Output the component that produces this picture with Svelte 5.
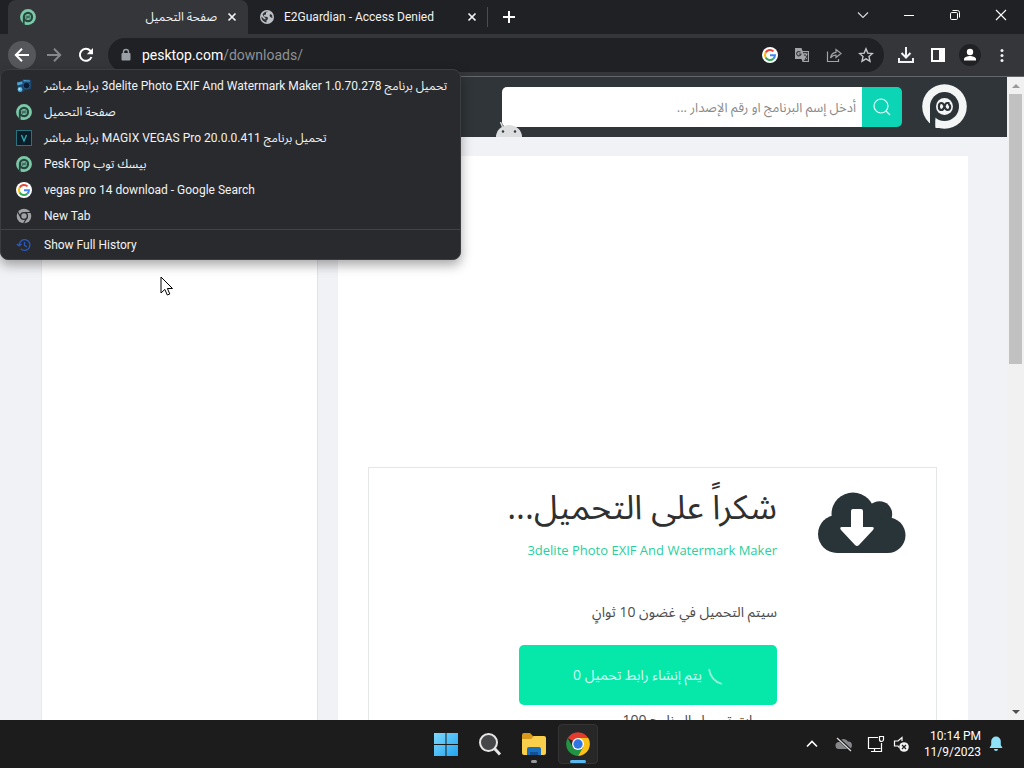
<script>
  const history = [
    { icon: 'camera', text: 'تحميل برنامج 3delite Photo EXIF And Watermark Maker 1.0.70.278 برابط مباشر', dir: 'rtl' },
    { icon: 'pesk', text: 'صفحة التحميل', dir: 'rtl' },
    { icon: 'vegas', text: 'تحميل برنامج MAGIX VEGAS Pro 20.0.0.411 برابط مباشر', dir: 'rtl' },
    { icon: 'pesk', text: 'PeskTop بيسك توب', dir: 'ltr' },
    { icon: 'google', text: 'vegas pro 14 download - Google Search', dir: 'ltr' },
    { icon: 'chrome', text: 'New Tab', dir: 'ltr' }
  ];
</script>

{#snippet pesk(size, color, inner)}
  <svg width={size} height={size} viewBox="0 0 45 45" aria-hidden="true">
    <circle cx="22.500" cy="22.500" r="22.300" fill={color} />
    <circle cx="22.500" cy="22.500" r="14.500" fill={inner} />
    <path fill={inner} d="M8 22H13.500V45H8Z" />
    <path fill={color} d="M13.500 35.500Q17 39 22 38.500V44H13.500Z" />
    <circle cx="22.500" cy="22.500" r="8.500" fill={color} />
    <path fill="none" stroke={inner} stroke-width="2.200" d="M27.500 19H25C22 19 23 26 19.500 26C16 26 16 19 19.500 19C23 19 22 26 25.500 26C29 26 29 20 26 20.500M17.500 26H20" />
  </svg>
{/snippet}

{#snippet google()}
  <svg width="16" height="16" viewBox="0 0 16 16" aria-hidden="true">
    <circle cx="8" cy="8" r="8" fill="#fff" />
    <g fill="none" stroke-width="2">
      <path stroke="#ea4335" d="M3.600 5.600A5 5 0 0 1 11.500 4.400" />
      <path stroke="#fbbc05" d="M3.600 10.400A5 5 0 0 1 3.600 5.600" />
      <path stroke="#34a853" d="M11.300 11.700A5 5 0 0 1 3.600 10.400" />
      <path stroke="#4285f4" d="M8 8.200H13A5 5 0 0 1 11.300 11.700" />
    </g>
  </svg>
{/snippet}

{#snippet close()}
  <svg width="10" height="10" viewBox="0 0 10 10" aria-hidden="true"><path d="M1.500 1.500l7 7M8.500 1.500l-7 7" stroke="#f1f3f4" stroke-width="1.700" /></svg>
{/snippet}

<div class="screen">
  <div class="tabstrip">
    <div class="tab active">
      {@render pesk(16, '#7bc9a8', '#28463f')}
      <span class="title" dir="rtl">صفحة التحميل</span>
      <button class="bare" aria-label="Close tab">{@render close()}</button>
    </div>
    <div class="tab">
      <svg width="14" height="14" viewBox="0 0 14 14" aria-hidden="true">
        <circle cx="7" cy="7" r="7" fill="#bdc1c6" />
        <path fill="#303236" d="M8 1.500L6 2.500V4.500L4 5V6.500L7.500 7L8 9L6.500 10.500V12.500A5.600 5.600 0 0 1 1.400 6.500L4 9L5.500 9.500V8L4 7L2.500 4.500A5.600 5.600 0 0 1 8 1.500ZM10 4l2 1 .5 3L11 7.500 9.500 6z" />
      </svg>
      <span class="title">E2Guardian - Access Denied</span>
      <button class="bare" aria-label="Close tab">{@render close()}</button>
    </div>
    <button class="bare new" aria-label="New tab"><svg width="14" height="14" viewBox="0 0 14 14"><path d="M7 1v12M1 7h12" stroke="#fff" stroke-width="2" /></svg></button>
    <div class="windowctl">
      <button class="bare" aria-label="Search tabs"><svg width="12" height="12" viewBox="0 0 12 12"><path d="M1 3.500l5 5 5-5" fill="none" stroke="#dadce0" stroke-width="1.100" /></svg></button>
      <button class="bare" aria-label="Minimize"><svg width="12" height="12" viewBox="0 0 12 12"><path d="M1 6.500h10" stroke="#fff" /></svg></button>
      <button class="bare" aria-label="Restore"><svg width="12" height="12" viewBox="0 0 12 12"><rect x="1.500" y="3.500" width="7" height="7" rx="1.200" fill="none" stroke="#fff" /><path d="M3.500 1.500H8.500a2 2 0 0 1 2 2V8.500" fill="none" stroke="#fff" /></svg></button>
      <button class="bare" aria-label="Close"><svg width="12" height="12" viewBox="0 0 12 12"><path d="M1 1l10 10M11 1L1 11" stroke="#fff" stroke-width="1.100" /></svg></button>
    </div>
  </div>

  <div class="toolbar">
    <button class="bare round lit" aria-label="Back"><svg width="16" height="16" viewBox="0 0 16 16"><path d="M15 8H2.500M8 1.800L1.800 8L8 14.200" fill="none" stroke="#fff" stroke-width="2" /></svg></button>
    <button class="bare round" aria-label="Forward"><svg width="16" height="16" viewBox="0 0 16 16"><path d="M1 8h12.500M8 1.800L14.200 8L8 14.200" fill="none" stroke="#85878a" stroke-width="2" /></svg></button>
    <button class="bare round" aria-label="Reload"><svg width="16" height="16" viewBox="0 0 16 16"><path d="M13.500 10A6 6 0 1 1 12.300 3.700L13 4.500" fill="none" stroke="#fff" stroke-width="2" /><path d="M15 1v6.200H8.800z" fill="#fff" /></svg></button>
    <div class="omnibox">
      <svg width="12" height="14" viewBox="0 0 12 14" aria-hidden="true"><rect x="1.500" y="5" width="9" height="7.500" rx="1" fill="#9aa0a6" /><path d="M3.500 5.500V4a2.500 2.500 0 0 1 5 0v1.500" fill="none" stroke="#9aa0a6" stroke-width="1.400" /></svg>
      <span class="url">pesktop.com<i>/downloads/</i></span>
      <div class="omniicons">
        <button class="bare" aria-label="Google">{@render google()}</button>
        <button class="bare" aria-label="Translate"><svg width="16" height="16" viewBox="0 0 16 16"><path fill="#a2a4a8" d="M1 1h6.500l1 3H15v11H8.500l-1-3H1z" /><path fill="#35363a" d="M8.800 5H14v9H9.300l2-2z" /><path d="M6.500 5.200A2.200 2.200 0 1 0 7 7H4.800" fill="none" stroke="#35363a" stroke-width="1.100" /><path d="M9 7h4.500M11 6v1M12.800 7c-.5 2-1.800 3.200-3 4M10 8.500c.8 1.500 1.800 2.500 3 3.200" fill="none" stroke="#b4b6b9" /></svg></button>
        <button class="bare" aria-label="Share"><svg width="16" height="16" viewBox="0 0 16 16"><path d="M1.500 4.500v10h11V12M4.500 11C5 7.500 7 5.500 10 5.300V2.500L15 6.500l-5 4V8C7.500 8 6 9 4.500 11z" fill="none" stroke="#a2a4a8" stroke-width="1.200" /></svg></button>
        <button class="bare" aria-label="Bookmark"><svg width="16" height="16" viewBox="0 0 16 16"><path d="M8 1.800l1.800 4.300 4.700.4-3.500 3.100 1 4.600L8 11.800l-4 2.400 1-4.600L1.500 6.500l4.700-.4z" fill="none" stroke="#c4c7ca" stroke-width="1.400" /></svg></button>
      </div>
    </div>
    <div class="actions">
      <button class="bare" aria-label="Downloads"><svg width="18" height="18" viewBox="0 0 18 18"><path d="M9 1v10M4.500 7L9 11.500 13.500 7M2 12v4h14v-4" fill="none" stroke="#f1f3f4" stroke-width="2" /></svg></button>
      <button class="bare" aria-label="Side panel"><svg width="16" height="16" viewBox="0 0 16 16"><rect x="2" y="2" width="12" height="12" fill="none" stroke="#fff" stroke-width="2" /><path d="M9 2h5v12H9z" fill="#fff" /></svg></button>
      <button class="bare" aria-label="Profile"><svg width="22" height="22" viewBox="0 0 22 22"><circle cx="11" cy="11" r="11" fill="#202124" /><circle cx="11" cy="8" r="3.200" fill="#fff" /><path d="M5 16.500v-1.500c0-2 4-3 6-3s6 1 6 3v1.500z" fill="#fff" /></svg></button>
      <button class="bare" aria-label="Menu"><svg width="16" height="16" viewBox="0 0 16 16" fill="#f1f3f4"><circle cx="8" cy="3.500" r="1.500" /><circle cx="8" cy="8.500" r="1.500" /><circle cx="8" cy="13.500" r="1.500" /></svg></button>
    </div>
  </div>

  <div class="viewport">
    <div class="page" dir="rtl">
      <header>
        <a class="logo" href="#home" aria-label="PeskTop">{@render pesk(45, '#f4f6f6', '#2d3438')}</a>
        <form class="search">
          <input type="text" aria-label="بحث" placeholder="أدخل إسم البرنامج او رقم الإصدار ..." />
          <button type="button" aria-label="بحث"><svg width="20" height="20" viewBox="0 0 20 20"><circle cx="9" cy="9" r="7" fill="none" stroke="#e6fffa" stroke-width="1.200" /><path d="M14 14l4 4" stroke="#e6fffa" stroke-width="1.200" /></svg></button>
          <svg class="droid" width="30" height="16" viewBox="0 0 30 16" aria-hidden="true"><path d="M2 16a13 12 0 0 1 26 0z" fill="#dcdddf" /><path d="M9 7L6.500 1" stroke="#dcdddf" stroke-width="1.500" /><circle cx="9" cy="10.500" r="1.200" fill="#2f3538" /><circle cx="21" cy="10.500" r="1.200" fill="#2f3538" /></svg>
        </form>
      </header>
      <div class="columns">
        <main>
          <section class="card">
            <svg class="cloud" width="88" height="62" viewBox="0 0 88 62" aria-hidden="true">
              <g fill="#293438">
                <circle cx="19" cy="42" r="19" />
                <circle cx="35" cy="22" r="21.500" />
                <circle cx="61.500" cy="22" r="12.700" />
                <circle cx="69.700" cy="43.200" r="17.800" />
                <path d="M19 28H70V61H19z" />
              </g>
              <path fill="#fff" d="M35 17h8q2 0 2 2v16h9q3 0 1 3L41 53q-2 2-4 0L23 38q-2-3 1-3h9V19q0-2 2-2z" />
            </svg>
            <div class="info">
              <h1>شكراً على التحميل...</h1>
              <a href="#program" dir="ltr">3delite Photo EXIF And Watermark Maker</a>
              <p>سيتم التحميل في غضون 10 ثوانٍ</p>
              <button class="make">
                <svg width="16" height="20" viewBox="0 0 16 20" aria-hidden="true"><path d="M2 4Q4 16 15 19" fill="none" stroke="#8df4d6" stroke-width="1.800" /></svg>
                <span>يتم إنشاء رابط تحميل 0</span>
              </button>
              <small>مرات تحميل البرنامج 100</small>
            </div>
          </section>
        </main>
        <aside></aside>
      </div>
    </div>
    <div class="scrollbar"><b class="up"></b><div class="thumb"></div><b class="down"></b></div>
  </div>

  <div class="taskbar">
    <div class="apps">
      <button class="bare app" aria-label="Start"><svg width="24" height="24" viewBox="0 0 24 24"><defs><linearGradient id="win" x1="0" y1="0" x2="1" y2="1"><stop offset="0" stop-color="#7ed8fb" /><stop offset="1" stop-color="#21a4f1" /></linearGradient></defs><path fill="url(#win)" d="M0 1h11.500v11H0zM12.500 1H24v11H12.500zM0 13h11.500v11H0zM12.500 13H24v11H12.500z" /></svg></button>
      <button class="bare app" aria-label="Search"><svg width="24" height="24" viewBox="0 0 24 24"><circle cx="10.500" cy="10.500" r="8.500" fill="#454749" stroke="#e6e6e6" stroke-width="2" /><path d="M16.500 16.500l5.500 6" stroke="#e6e6e6" stroke-width="3" /></svg></button>
      <button class="bare app files" aria-label="File Explorer"><svg width="26" height="24" viewBox="0 0 26 24"><path fill="#d99a1c" d="M1 3q0-2 2-2h6l3 3h11v6H1z" /><path fill="#f9cf4b" d="M1 7h9l3-3h10q2 0 2 2v15q0 2-2 2H3q-2 0-2-2z" /><path fill="#1a70bd" d="M6 23v-6q0-2 2-2h10q2 0 2 2v6z" /><path fill="#134f91" d="M9 20h8v3H9z" /></svg></button>
      <button class="bare app current" aria-label="Google Chrome">
        <svg width="26" height="26" viewBox="0 0 24 24"><path fill="#e33b2e" d="M12 12L2.500 6.500A11 11 0 0 1 21.500 6.500Z" /><path fill="#229342" d="M2.500 6.500L7.200 14.700 12 17.500 16.800 14.700 12 23A11 11 0 0 1 2.500 6.500z" /><path fill="#fbc116" d="M16.800 14.700L12 23A11 11 0 0 0 21.500 6.500H12z" /><circle cx="12" cy="12" r="5.500" fill="#fff" /><circle cx="12" cy="12" r="4.300" fill="#2f76e3" /></svg>
      </button>
    </div>
    <div class="tray">
      <svg width="12" height="12" viewBox="0 0 12 12" aria-hidden="true"><path d="M1 8.500l5-5 5 5" fill="none" stroke="#fff" stroke-width="1.600" /></svg>
      <svg class="onedrive" width="18" height="16" viewBox="0 0 18 16" aria-hidden="true"><path d="M4 13a3.500 3.500 0 0 1 0-7A5 5 0 0 1 13 5.500a3.800 3.800 0 0 1 1 7.500z" fill="#85878a" /><path d="M2 1.500l14 13" stroke="#1c1c1c" stroke-width="3" /><path d="M2 2l14 13" stroke="#e0e0e0" stroke-width="1.200" /></svg>
      <svg width="18" height="18" viewBox="0 0 18 18" aria-hidden="true"><path d="M11 2.500H1.500v11h12M7.500 13.500v3M4 16.500h9M14.500 8v8.500H12M12.500 1.500h4v3a2 2 0 0 1-4 0z" fill="none" stroke="#fff" stroke-width="1.200" /></svg>
      <svg width="16" height="16" viewBox="0 0 16 16" aria-hidden="true"><path d="M9 5V1.500L5 5H1.500v5H5l1 1.500" fill="none" stroke="#fff" stroke-width="1.200" /><circle cx="11" cy="11" r="4.800" fill="#f3f3f3" /><path d="M9 9l4 4M13 9l-4 4" stroke="#1c1c1c" stroke-width="1.200" /></svg>
      <div class="clock"><span>10:14 PM</span><span>11/9/2023</span></div>
      <svg class="bell" width="14" height="16" viewBox="0 0 14 16" aria-hidden="true"><path fill="#8fe1f8" d="M7 .5A4.800 4.800 0 0 1 11.800 5.300V9l1.700 3H.5L2.200 9V5.300A4.800 4.800 0 0 1 7 .5zM5 13h4a2 2 0 0 1-4 0z" /></svg>
    </div>
  </div>

  <nav class="history" aria-label="History">
    <ul>
      {#each history as item}
        <li>
          <button class="row">
            {#if item.icon === 'pesk'}
              {@render pesk(16, '#7bc9a8', '#28463f')}
            {:else if item.icon === 'google'}
              {@render google()}
            {:else if item.icon === 'vegas'}
              <svg width="16" height="16" viewBox="0 0 16 16" aria-hidden="true"><rect x=".5" y=".5" width="15" height="15" fill="#0a1d29" stroke="#27747e" /><path d="M5.500 5L8 11l2.500-6" fill="none" stroke="#2ea6b4" stroke-width="1.400" /></svg>
            {:else if item.icon === 'chrome'}
              <svg width="16" height="16" viewBox="0 0 16 16" aria-hidden="true"><circle cx="8" cy="8" r="7.300" fill="#a0a2a6" /><path d="M8 4.500h7M5 9.800L1.600 3.700M11 9.800L7.500 15.500" stroke="#292a2d" stroke-width="1.200" /><circle cx="8" cy="8" r="3.400" fill="#a0a2a6" stroke="#292a2d" stroke-width="1.400" /></svg>
            {:else}
              <svg width="16" height="16" viewBox="0 0 16 16" aria-hidden="true"><path fill="#1b466f" d="M1 4l5-1 1-2 7 .5 1.500 1.500-.5 8-6 1-3 2.500-4-1-.5-4z" /><path fill="#4ca3d6" d="M1 4.500l5.500-1V6L1.500 7.500zM7.500 2l6.500.5v1L7.500 3.500z" /><circle cx="10.500" cy="7.500" r="3.400" fill="#0b1d33" stroke="#285a86" /><circle cx="4" cy="11.500" r="2.400" fill="#5cb4da" /><circle cx="3.500" cy="11" r="1" fill="#bfe9f7" /></svg>
            {/if}
            <span dir={item.dir}>{item.text}</span>
          </button>
        </li>
      {/each}
    </ul>
    <button class="row full">
      <svg width="16" height="16" viewBox="0 0 16 16" aria-hidden="true"><path d="M3.200 8a5.400 5.400 0 1 1 1.600 3.900M.8 7l2.400 2 2.300-2M8.500 5v3.500l2.500 1.500" fill="none" stroke="#2a5bc0" stroke-width="1.300" /></svg>
      <span>Show Full History</span>
    </button>
  </nav>

  <svg class="cursor" width="14" height="21" viewBox="0 0 14 21" aria-hidden="true"><path d="M1 1v16l3.800-3.600L7.300 19l2.500-1-2.400-5.500h5.100z" fill="#fff" stroke="#000" /></svg>
</div>

<style>
  :global(body) { margin: 0; background: #1c1c1c; }
  .screen {
    position: relative;
    display: flex;
    flex-direction: column;
    height: 100vh;
    overflow: hidden;
    font: 12px/16px Roboto, "Open Sans", "Noto Sans Arabic", "DejaVu Sans", sans-serif;
    color: #f1f3f4;
  }
  svg { display: block; flex: none; }
  button, input { font: inherit; color: inherit; }
  .bare {
    display: flex;
    align-items: center;
    justify-content: center;
    padding: 0;
    border: 0;
    background: none;
  }

  .tabstrip { display: flex; height: 34px; padding-left: 8px; background: #202124; }
  .tab {
    display: flex;
    align-items: center;
    gap: 10px;
    width: 240px;
    box-sizing: border-box;
    padding: 0 10px 0 12px;
    border-right: 1px solid transparent;
  }
  .tab.active { border-radius: 8px 8px 0 0; background: #35363a; }
  .tab:not(.active) { height: 20px; margin-top: 7px; border-right-color: #4a4c50; }
  .tab .title { flex: 1; white-space: nowrap; overflow: hidden; }
  .new { width: 42px; }
  .windowctl { display: flex; margin-left: auto; height: 30px; }
  .windowctl button { width: 46px; }

  .toolbar {
    display: flex;
    align-items: center;
    height: 42px;
    padding: 0 6px 0 8px;
    background: #35363a;
    border-bottom: 1px solid #65686b;
  }
  .round { width: 28px; height: 28px; margin-right: 4px; border-radius: 50%; }
  .lit { background: #55575b; }
  .omnibox {
    display: flex;
    flex: 1;
    align-items: center;
    gap: 10px;
    height: 34px;
    margin-left: 4px;
    padding: 0 10px 0 12px;
    border-radius: 17px;
    background: #202124;
  }
  .url { flex: 1; font-size: 14px; line-height: 20px; color: #fff; }
  .url i { font-style: normal; color: #8e9195; }
  .omniicons { display: flex; gap: 16px; }
  .actions { display: flex; align-items: center; margin-left: 6px; }
  .actions button { width: 32px; }

  .viewport { display: flex; flex: 1; min-height: 0; }
  .page {
    display: flex;
    flex-direction: column;
    flex: 1;
    min-width: 0;
    overflow: hidden;
    background: #f1f2f5;
    color: #4c4c4c;
    font-family: "Open Sans", "Noto Sans Arabic", "DejaVu Sans", sans-serif;
  }
  header {
    display: flex;
    flex: none;
    align-items: center;
    gap: 20px;
    height: 60px;
    padding: 0 40px;
    background: #2f3538;
  }
  .logo { padding-bottom: 2px; }
  .search { position: relative; display: flex; width: 400px; height: 40px; direction: ltr; }
  .search input {
    flex: 1;
    min-width: 0;
    padding: 0 6px;
    border: 0;
    border-radius: 5px 0 0 5px;
    background: #fff;
    color: #555;
    font-size: 13px;
    text-align: right;
    direction: rtl;
  }
  .search input::placeholder { color: #8a8a8a; opacity: 1; }
  .search button {
    display: flex;
    align-items: center;
    justify-content: center;
    width: 40px;
    padding: 0;
    border: 0;
    border-radius: 0 5px 5px 0;
    background: #0cd5b5;
  }
  .droid { position: absolute; left: -8px; bottom: -10px; }
  .columns {
    display: grid;
    flex: 1;
    grid-template-columns: 630fr 277fr;
    gap: 20px;
    min-height: 0;
    padding: 19px 39px 0 41px;
  }
  main, aside { background: #fff; min-height: 0; }
  aside { border-right: 1px solid #e2e3e6; border-left: 1px solid #e9eaed; }
  main { overflow: hidden; }
  .card {
    display: flex;
    align-items: flex-start;
    gap: 41px;
    height: 400px;
    margin: 311px 31px 0 30px;
    padding: 0 30px;
    border: 1px solid #e5e6e8;
  }
  .cloud { margin-top: 24px; }
  .info { display: flex; flex-direction: column; align-items: flex-start; padding-top: 8px; }
  h1 { margin: 0; font-size: 34px; line-height: 60px; font-weight: 400; color: #303030; white-space: nowrap; }
  .info a { margin-top: 4px; font-size: 13px; line-height: 20px; color: #29cf9c; text-decoration: none; }
  .info p { margin: 40px 0 0; font-size: 14px; line-height: 24px; }
  .make {
    display: flex;
    align-items: center;
    justify-content: center;
    gap: 5px;
    width: 258px;
    height: 60px;
    margin-top: 21px;
    padding: 0;
    border: 0;
    border-radius: 5px;
    background: #05e8a9;
    color: #d2fff2;
    font-size: 14px;
  }
  .info small { margin: 5px 12px 0; font-size: 14px; line-height: 20px; }

  .scrollbar {
    display: flex;
    flex-direction: column;
    align-items: center;
    width: 17px;
    background: #f1f1f1;
  }
  .scrollbar b { width: 0; height: 0; border: 4px solid transparent; margin: 3px 0 6px; }
  .scrollbar .up { border-bottom-color: #9a9a9a; }
  .scrollbar .down { margin: auto 0 2px; border-top-color: #505050; }
  .thumb { width: 13px; height: 42%; background: #c1c1c1; }

  .taskbar {
    display: grid;
    grid-template-columns: 1fr auto 1fr;
    align-items: center;
    height: 48px;
    background: #1c1c1c;
  }
  .apps { grid-column: 2; display: flex; gap: 4px; }
  .app { position: relative; width: 40px; height: 40px; box-sizing: border-box; border-radius: 4px; }
  .current { background: #272727; border: 1px solid #343434; }
  .files::after, .current::after {
    content: "";
    position: absolute;
    bottom: 1px;
    width: 6px;
    height: 3px;
    border-radius: 2px;
    background: #9a9a9a;
  }
  .current::after { bottom: 0; width: 16px; background: #58b7ef; }
  .tray { display: flex; align-items: center; justify-content: flex-end; gap: 8px; padding-right: 21px; }
  .onedrive { margin: 0 6px 0 9px; }
  .clock { display: flex; flex-direction: column; text-align: right; margin-left: 7px; color: #fff; }

  .history {
    position: absolute;
    top: 69px;
    left: 0;
    box-sizing: border-box;
    width: 461px;
    padding-top: 3px;
    border: 1px solid #3c3d40;
    border-radius: 8px;
    background: #292a2d;
    box-shadow: 0 5px 12px rgba(0, 0, 0, 0.35);
  }
  ul { margin: 0; padding: 0; list-style: none; }
  .row {
    display: flex;
    align-items: center;
    gap: 12px;
    width: 100%;
    height: 26px;
    padding: 0 15px;
    border: 0;
    background: none;
    white-space: nowrap;
  }
  .full { height: 30px; border-top: 1px solid #424346; }
  .cursor { position: absolute; left: 160px; top: 276px; }
</style>
